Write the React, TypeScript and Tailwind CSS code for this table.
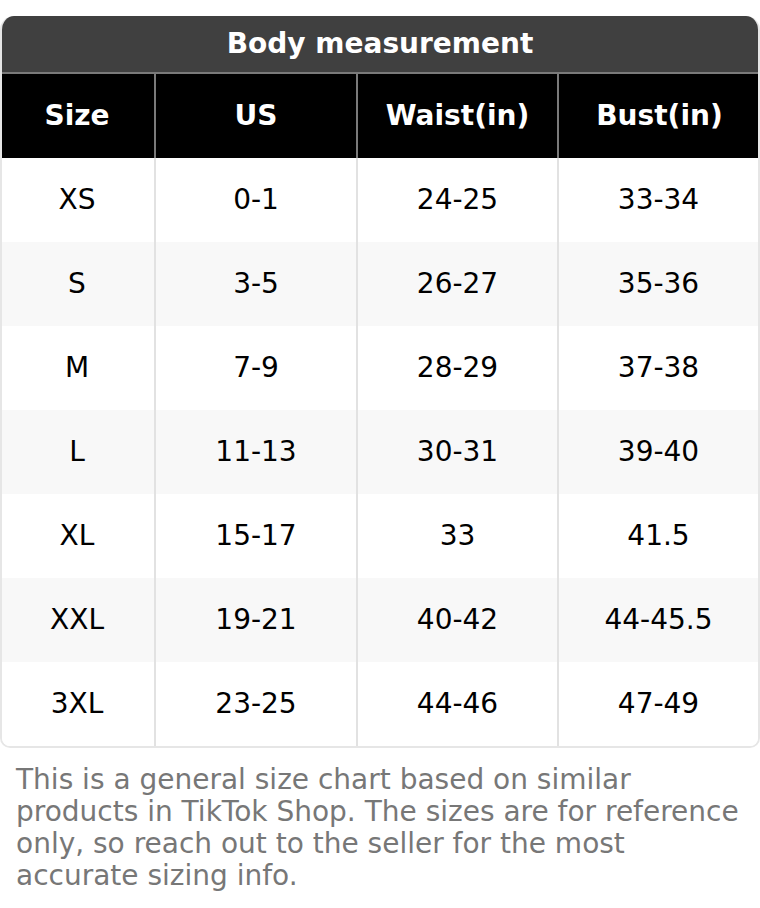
const rows = [
  ['XS', '0-1', '24-25', '33-34'],
  ['S', '3-5', '26-27', '35-36'],
  ['M', '7-9', '28-29', '37-38'],
  ['L', '11-13', '30-31', '39-40'],
  ['XL', '15-17', '33', '41.5'],
  ['XXL', '19-21', '40-42', '44-45.5'],
  ['3XL', '23-25', '44-46', '47-49'],
];

const headers = ['Size', 'US', 'Waist(in)', 'Bust(in)'];

export default function App() {
  return (
    <div className="min-h-screen bg-white pt-4 font-['DejaVu_Sans',sans-serif]">
      <div className="overflow-hidden rounded-t-[14px] rounded-b-[10px] border-x-2 border-b-2 border-[#e6e6e6]">
        <div className="-mx-[2px] flex h-14 items-center justify-center bg-[#404040] text-[28px] font-bold text-white">
          Body measurement
        </div>
        <div className="-mx-[2px] grid grid-cols-[154px_202px_201px_1fr] border-t-2 border-[#7a7a7a] bg-black">
          {headers.map((h, i) => (
            <div
              key={h}
              className={`flex h-[84px] items-center justify-center text-[28px] font-bold text-white ${i > 0 ? 'border-l-2 border-[#7a7a7a]' : ''}`}
            >
              {h}
            </div>
          ))}
        </div>
        {rows.map((r, ri) => (
          <div
            key={r[0]}
            className={`-ml-[2px] grid grid-cols-[154px_202px_201px_1fr] ${ri % 2 === 1 ? 'bg-[#f8f8f8]' : 'bg-white'}`}
          >
            {r.map((c, ci) => (
              <div
                key={ci}
                className={`flex h-[84px] items-center justify-center text-[28px] text-black ${ci > 0 ? 'border-l-2 border-[#e2e2e2]' : ''}`}
              >
                {c}
              </div>
            ))}
          </div>
        ))}
      </div>
      <p className="px-4 pt-4 text-[28px] leading-8 text-[#777777]">
        This is a general size chart based on similar products in TikTok Shop. The sizes are for reference only, so reach out to the seller for the most accurate sizing info.
      </p>
    </div>
  );
}
